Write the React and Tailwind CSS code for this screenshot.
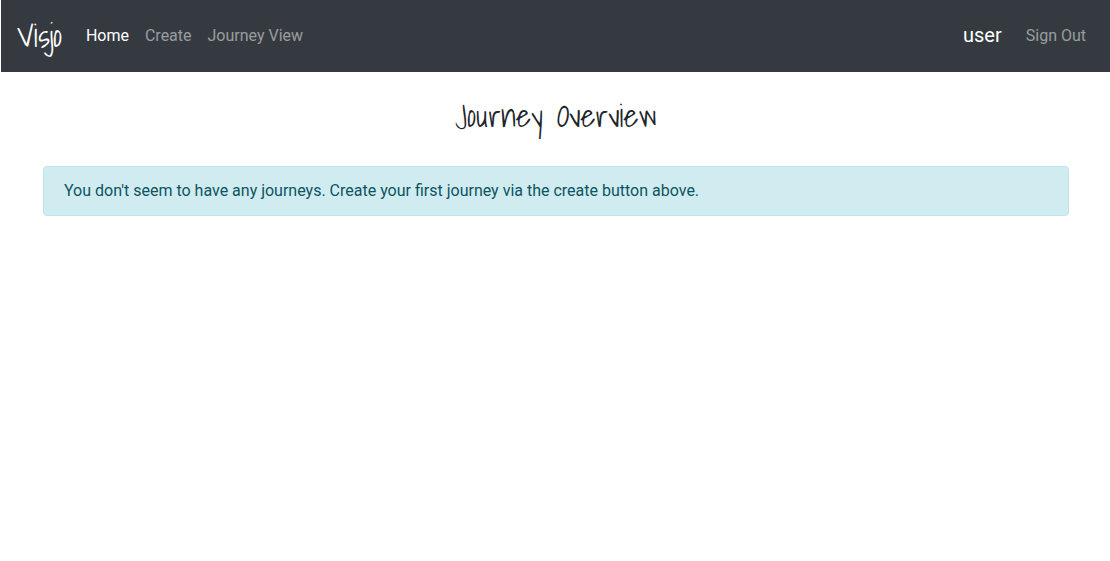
const links = [
  { label: 'Home', active: true },
  { label: 'Create', active: false },
  { label: 'Journey View', active: false },
];

const script = "font-['Shadows_Into_Light',cursive] font-normal text-[32px]";

function NavLink({ label, active }) {
  return (
    <a
      href="#"
      aria-current={active ? 'page' : undefined}
      className={active ? 'p-2 text-white' : 'p-2 text-white/50 hover:text-white/75'}
    >
      {label}
    </a>
  );
}

function NavBar() {
  return (
    <nav className="flex h-18 items-center bg-[#343a40] px-4">
      <a href="#" className={`${script} mr-4 pb-0.5 leading-12 text-white`}>
        Visjo
      </a>
      <div className="flex flex-1 items-center">
        {links.map((link) => (
          <NavLink key={link.label} {...link} />
        ))}
      </div>
      <span className="mr-4 pb-0.5 text-xl leading-6 text-white">user</span>
      <NavLink label="Sign Out" active={false} />
    </nav>
  );
}

export default function App() {
  return (
    <div className="min-h-screen bg-white pl-px font-['Roboto',sans-serif] text-base leading-6 text-[#212529]">
      <NavBar />
      <main className="pr-[41px] pl-[42px] pt-6">
        <h1 className={`${script} text-center leading-[38px]`}>Journey Overview</h1>
        <div
          role="alert"
          className="mt-8 rounded border border-[#bee5eb] bg-[#d1ecf1] px-5 py-3 text-[#0c5460]"
        >
          You don't seem to have any journeys. Create your first journey via the create button above.
        </div>
      </main>
    </div>
  );
}
